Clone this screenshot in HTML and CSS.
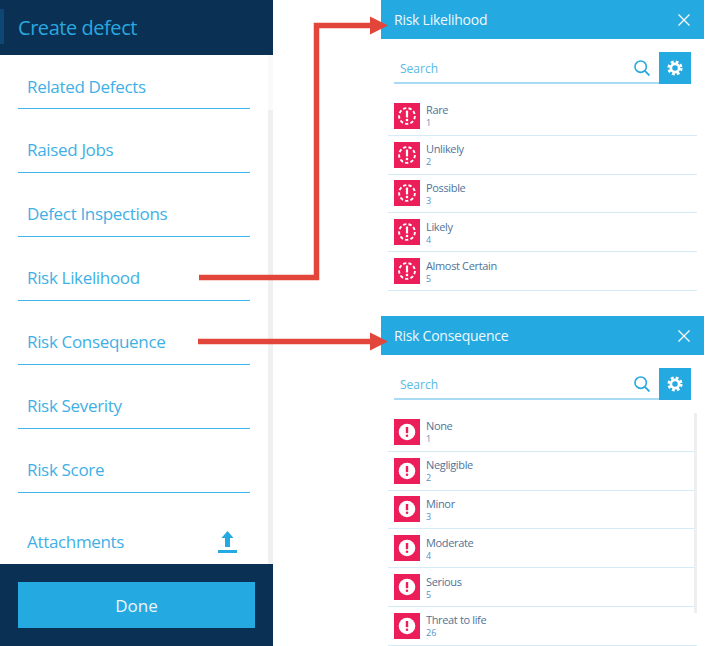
FILE: index.html
```html
<!DOCTYPE html>
<html lang="en">
<head>
    <meta charset="UTF-8">
    <meta name="viewport" content="width=device-width, initial-scale=1.0">
    <title>Create defect</title>
    <link rel="stylesheet" href="styles.css">
</head>
<body>
    <svg width="0" height="0" class="defs">
        <symbol id="icon-search" viewBox="0 0 18 18">
            <circle cx="7.5" cy="7.5" r="6.4" fill="none" stroke="#25a9e1" stroke-width="1.8"/>
            <path d="M12 12l5.4 5.4" stroke="#25a9e1" stroke-width="2.1" fill="none"/>
        </symbol>
        <symbol id="icon-gear" viewBox="0 0 18 18">
            <circle cx="9" cy="9" r="4.6" fill="none" stroke="#fff" stroke-width="3"/>
            <circle cx="9" cy="9" r="7" fill="none" stroke="#fff" stroke-width="3" stroke-dasharray="3.1 2.4"/>
        </symbol>
        <symbol id="icon-close" viewBox="0 0 12 12">
            <path d="M.5 .5l11 11M11.500 .5l-11 11" stroke="#fff" stroke-width="1.3" fill="none"/>
        </symbol>
        <symbol id="icon-dashed" viewBox="0 0 26 26">
            <circle cx="13" cy="13" r="7.9" fill="none" stroke="#fff" stroke-width="1.9" stroke-dasharray="3.3 2.2"/>
            <rect x="11.900" y="7.600" width="2.200" height="6.800" fill="#fff"/>
            <circle cx="13" cy="17" r="1.300" fill="#fff"/>
        </symbol>
        <symbol id="icon-solid" viewBox="0 0 26 26">
            <circle cx="13" cy="13" r="8.300" fill="#fff"/>
            <rect x="11.800" y="8" width="2.400" height="6.200" fill="#ec1e5a"/>
            <circle cx="13" cy="16.800" r="1.300" fill="#ec1e5a"/>
        </symbol>
    </svg>

    <div class="page">
        <div class="defect">
            <div class="defect-header">
                <span class="defect-tab"></span>
                <h1>Create defect</h1>
            </div>
            <div class="defect-body">
                <div class="field">Related Defects</div>
                <div class="field">Raised Jobs</div>
                <div class="field">Defect Inspections</div>
                <div class="field">Risk Likelihood</div>
                <div class="field">Risk Consequence</div>
                <div class="field">Risk Severity</div>
                <div class="field">Risk Score</div>
                <div class="attachments">
                    <span>Attachments</span>
                    <svg width="19" height="22" viewBox="0 0 19 22">
                        <path d="M9.500 0L15.500 7H12V16H7V7H3.500Z" fill="#25a9e1"/>
                        <rect x="0" y="19" width="19" height="3" fill="#25a9e1"/>
                    </svg>
                </div>
                <span class="scrollbar"></span>
            </div>
            <div class="defect-footer">
                <button type="button">Done</button>
            </div>
        </div>

        <div class="pickers">
            <div class="picker">
                <div class="picker-header">
                    <h2>Risk Likelihood</h2>
                    <svg width="12" height="12"><use href="#icon-close"/></svg>
                </div>
                <div class="search">
                    <div class="search-input">
                        <span>Search</span>
                        <svg width="16" height="16"><use href="#icon-search"/></svg>
                    </div>
                    <div class="gear"><svg width="16" height="16"><use href="#icon-gear"/></svg></div>
                </div>
                <ul class="options">
                    <li><span class="badge"><svg width="26" height="26"><use href="#icon-dashed"/></svg></span><div><p>Rare</p><small>1</small></div></li>
                    <li><span class="badge"><svg width="26" height="26"><use href="#icon-dashed"/></svg></span><div><p>Unlikely</p><small>2</small></div></li>
                    <li><span class="badge"><svg width="26" height="26"><use href="#icon-dashed"/></svg></span><div><p>Possible</p><small>3</small></div></li>
                    <li><span class="badge"><svg width="26" height="26"><use href="#icon-dashed"/></svg></span><div><p>Likely</p><small>4</small></div></li>
                    <li><span class="badge"><svg width="26" height="26"><use href="#icon-dashed"/></svg></span><div><p>Almost Certain</p><small>5</small></div></li>
                </ul>
            </div>

            <div class="picker">
                <div class="picker-header">
                    <h2>Risk Consequence</h2>
                    <svg width="12" height="12"><use href="#icon-close"/></svg>
                </div>
                <div class="search">
                    <div class="search-input">
                        <span>Search</span>
                        <svg width="16" height="16"><use href="#icon-search"/></svg>
                    </div>
                    <div class="gear"><svg width="16" height="16"><use href="#icon-gear"/></svg></div>
                </div>
                <ul class="options options-scroll">
                    <li><span class="badge"><svg width="26" height="26"><use href="#icon-solid"/></svg></span><div><p>None</p><small>1</small></div></li>
                    <li><span class="badge"><svg width="26" height="26"><use href="#icon-solid"/></svg></span><div><p>Negligible</p><small>2</small></div></li>
                    <li><span class="badge"><svg width="26" height="26"><use href="#icon-solid"/></svg></span><div><p>Minor</p><small>3</small></div></li>
                    <li><span class="badge"><svg width="26" height="26"><use href="#icon-solid"/></svg></span><div><p>Moderate</p><small>4</small></div></li>
                    <li><span class="badge"><svg width="26" height="26"><use href="#icon-solid"/></svg></span><div><p>Serious</p><small>5</small></div></li>
                    <li><span class="badge"><svg width="26" height="26"><use href="#icon-solid"/></svg></span><div><p>Threat to life</p><small>26</small></div></li>
                </ul>
            </div>
        </div>

        <!-- annotation arrows -->
        <svg class="arrows" width="705" height="646" viewBox="0 0 705 646">
            <path d="M199 277.500H316.500V25.500H372" fill="none" stroke="#e2463a" stroke-width="5.500"/>
            <path d="M370 16.500L388 25.500L370 34.500Z" fill="#e2463a"/>
            <path d="M198 341.500H372" fill="none" stroke="#e2463a" stroke-width="5.500"/>
            <path d="M370 332.500L388 341.500L370 350.500Z" fill="#e2463a"/>
        </svg>
    </div>
</body>
</html>
```

FILE: styles.css
```css
* {
    margin: 0;
    padding: 0;
    box-sizing: border-box;
}

body {
    font-family: 'Open Sans', 'Noto Sans', sans-serif;
    background: white;
    overflow: hidden;
}

.defs {
    display: block;
    height: 0;
}

.page {
    position: relative;
    display: flex;
    gap: 108px;
    width: 705px;
    height: 646px;
    overflow: hidden;
}

/* left form */
.defect {
    display: flex;
    flex-direction: column;
    width: 273px;
    height: 646px;
    flex-shrink: 0;
}

.defect-header {
    position: relative;
    height: 55px;
    padding: 14px 0 0 18px;
    background: #0a3154;
}

.defect-header h1 {
    font-size: 20px;
    font-weight: 400;
    line-height: 27px;
    letter-spacing: -0.45px;
    color: #2aa7df;
}

.defect-tab {
    position: absolute;
    left: 0;
    top: 9px;
    width: 4px;
    height: 35px;
    background: #0e4674;
}

.defect-body {
    position: relative;
    flex: 1;
    padding: 0 23px 0 18px;
}

.field {
    height: 64px;
    padding: 28px 0 0 9px;
    font-size: 17px;
    line-height: 26px;
    letter-spacing: -0.33px;
    color: #3fb0e5;
    border-bottom: 1px solid #3db5ea;
}

.field:first-child {
    height: 54px;
    padding-top: 19px;
}

.attachments {
    display: flex;
    justify-content: space-between;
    align-items: center;
    padding: 36px 13px 0 9px;
    font-size: 17px;
    line-height: 26px;
    letter-spacing: -0.33px;
    color: #3fb0e5;
}

.scrollbar {
    position: absolute;
    right: 0;
    top: 0;
    bottom: 0;
    width: 5px;
    background: #fafafa;
}

.scrollbar::after {
    content: "";
    position: absolute;
    left: 0;
    top: 55px;
    bottom: 0;
    width: 5px;
    background: #f0f0f0;
}

.defect-footer {
    height: 82px;
    padding: 18px;
    background: #0a3154;
}

.defect-footer button {
    display: block;
    width: 237px;
    height: 46px;
    border: none;
    background: #25a9e1;
    color: #eaf6fc;
    font-family: inherit;
    font-size: 17px;
}

/* right pickers */
.pickers {
    display: flex;
    flex-direction: column;
    gap: 17px;
    width: 323px;
    flex-shrink: 0;
}

.picker {
    position: relative;
    height: 299px;
}

.picker-header {
    display: flex;
    justify-content: space-between;
    align-items: center;
    height: 39px;
    padding: 0 14px 0 13px;
    background: #25a9e1;
}

.picker-header h2 {
    font-size: 14px;
    font-weight: 400;
    letter-spacing: -0.25px;
    color: #eef8fd;
}

.search {
    display: flex;
    height: 32px;
    margin: 13px 13px 0;
}

.search-input {
    flex: 1;
    display: flex;
    justify-content: space-between;
    align-items: center;
    padding: 2px 9px 0 6px;
    border-bottom: 2px solid #a9dcf4;
    font-size: 12px;
    color: #56b9e6;
}

.gear {
    display: flex;
    align-items: center;
    justify-content: center;
    width: 32px;
    background: #25a9e1;
}

.options {
    list-style: none;
    margin: 13px 7px 0;
}

.options li {
    display: flex;
    gap: 6px;
    align-items: center;
    height: 38.8px;
    padding-left: 6px;
    border-bottom: 1px solid #d5ecf7;
}

.options li div {
    padding-top: 1px;
}

.options p {
    font-size: 11px;
    line-height: 14px;
    letter-spacing: -0.35px;
    color: #4f7399;
}

.options small {
    display: block;
    font-size: 9px;
    line-height: 12px;
    color: #5a90bf;
}

.badge {
    display: block;
    width: 26px;
    height: 26px;
    background: #ec1e5a;
}

.badge svg {
    display: block;
}

.options-scroll {
    position: relative;
}

.options-scroll::after {
    content: "";
    position: absolute;
    right: 0;
    top: 0;
    width: 3px;
    height: 200px;
    background: #eeeeee;
}

.arrows {
    position: absolute;
    left: 0;
    top: 0;
    pointer-events: none;
}
```
